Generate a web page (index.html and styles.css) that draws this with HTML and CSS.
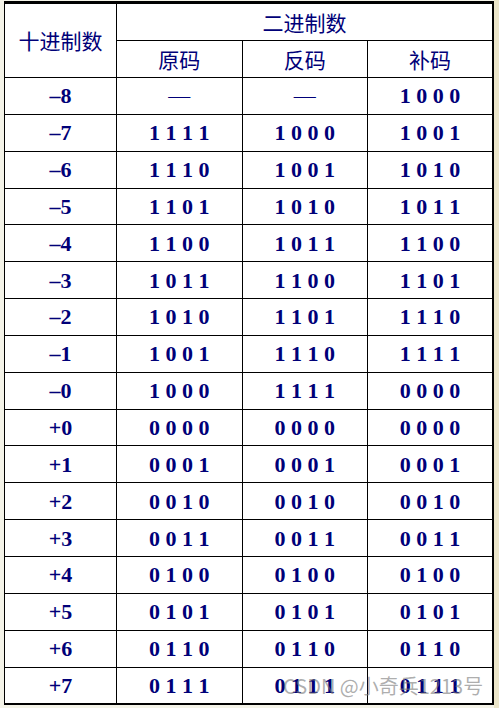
FILE: index.html
```html
<!DOCTYPE html>
<html lang="zh">
<head>
<meta charset="utf-8">
<title>原码 反码 补码</title>
<link rel="stylesheet" href="styles.css">
</head>
<body>
<div class="page">
  <table class="codes">
    <thead>
      <tr>
        <th class="zh dec-head" rowspan="2">十进制数</th>
        <th class="zh" colspan="3">二进制数</th>
      </tr>
      <tr>
        <th class="zh">原码</th>
        <th class="zh">反码</th>
        <th class="zh">补码</th>
      </tr>
    </thead>
    <tbody>
      <tr><td>–8</td><td class="dash">—</td><td class="dash">—</td><td>1 0 0 0</td></tr>
      <tr><td>–7</td><td>1 1 1 1</td><td>1 0 0 0</td><td>1 0 0 1</td></tr>
      <tr><td>–6</td><td>1 1 1 0</td><td>1 0 0 1</td><td>1 0 1 0</td></tr>
      <tr><td>–5</td><td>1 1 0 1</td><td>1 0 1 0</td><td>1 0 1 1</td></tr>
      <tr><td>–4</td><td>1 1 0 0</td><td>1 0 1 1</td><td>1 1 0 0</td></tr>
      <tr><td>–3</td><td>1 0 1 1</td><td>1 1 0 0</td><td>1 1 0 1</td></tr>
      <tr><td>–2</td><td>1 0 1 0</td><td>1 1 0 1</td><td>1 1 1 0</td></tr>
      <tr><td>–1</td><td>1 0 0 1</td><td>1 1 1 0</td><td>1 1 1 1</td></tr>
      <tr><td>–0</td><td>1 0 0 0</td><td>1 1 1 1</td><td>0 0 0 0</td></tr>
      <tr><td>+0</td><td>0 0 0 0</td><td>0 0 0 0</td><td>0 0 0 0</td></tr>
      <tr><td>+1</td><td>0 0 0 1</td><td>0 0 0 1</td><td>0 0 0 1</td></tr>
      <tr><td>+2</td><td>0 0 1 0</td><td>0 0 1 0</td><td>0 0 1 0</td></tr>
      <tr><td>+3</td><td>0 0 1 1</td><td>0 0 1 1</td><td>0 0 1 1</td></tr>
      <tr><td>+4</td><td>0 1 0 0</td><td>0 1 0 0</td><td>0 1 0 0</td></tr>
      <tr><td>+5</td><td>0 1 0 1</td><td>0 1 0 1</td><td>0 1 0 1</td></tr>
      <tr><td>+6</td><td>0 1 1 0</td><td>0 1 1 0</td><td>0 1 1 0</td></tr>
      <tr><td>+7</td><td>0 1 1 1</td><td>0 1 1 1</td><td>0 1 1 1</td></tr>
    </tbody>
  </table>
  <div class="watermark">CSDN @小奇兵1213号</div>
</div>
</body>
</html>
```
FILE: styles.css
```css
html, body {
  margin: 0;
  padding: 0;
  background: #f4f3e8;
}
.page {
  position: relative;
  width: 499px;
  height: 708px;
  padding: 1px 0 0 4px;
  box-sizing: border-box;
  background: linear-gradient(to right, #f4f3e8 0, #f4f3e8 494px, #ebe5c9 494px);
}
.codes {
  border-collapse: collapse;
  width: 490px;
  table-layout: fixed;
  background: #fff;
  border-top: 3px solid #000;
  border-left: 1px solid #000;
  border-right: 2px solid #000;
  border-bottom: 2px solid #000;
  color: #000078;
  font-family: "Liberation Serif", "Times New Roman", serif;
}
.codes th, .codes td {
  border: 1px solid #000;
  padding: 0;
  text-align: center;
  vertical-align: middle;
}
.codes th {
  height: 36px;
}
.codes th:first-child, .codes td:first-child {
  width: 111px;
}
.codes thead tr:nth-child(2) th:nth-child(1) { width: 125px; }
.codes thead tr:nth-child(2) th:nth-child(2) { width: 124px; }
.codes td {
  height: 34.85px;
  font-size: 22px;
  font-weight: bold;
  line-height: 1;
  padding-top: 1px;
}
.codes td.dash {
  font-weight: normal;
}
.zh {
  font-family: "Noto Sans CJK SC", sans-serif;
  font-weight: 400;
  font-size: 21px;
  line-height: 1;
}
.dec-head {
  padding-bottom: 4px;
}
.watermark {
  position: absolute;
  left: 283px;
  top: 676px;
  font-family: "Noto Sans CJK SC", sans-serif;
  font-size: 20px;
  line-height: 1;
  color: rgba(120, 120, 120, 0.6);
  white-space: nowrap;
}
```
